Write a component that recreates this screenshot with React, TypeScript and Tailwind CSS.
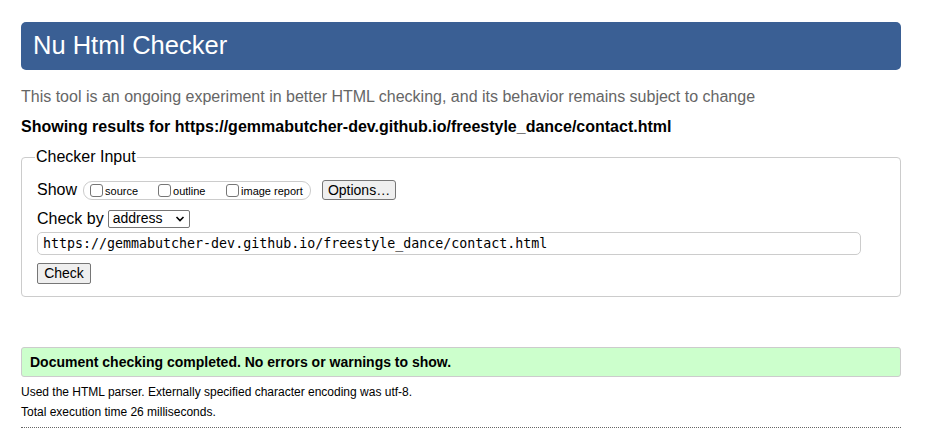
import React from "react";

const Box = ({ label }: { label: string }) => (
  <span className="flex items-center">
    <span className="inline-block w-[13px] h-[13px] border border-[#767676] rounded-[3px] bg-white" />
    <span className="ml-[2px] mt-[2px] text-[11px] leading-none text-black">{label}</span>
  </span>
);

export default function App() {
  return (
    <div
      className="w-[930px] h-[428px] bg-white overflow-hidden pl-[21px] pr-[29px] pt-[22px] text-black"
      style={{ fontFamily: '"Liberation Sans", Arial, sans-serif' }}
    >
      <div className="h-[48px] bg-[#3a5f94] rounded-[5px] flex items-center pl-[12px]">
        <h1 className="text-white text-[25.5px] leading-none">Nu Html Checker</h1>
      </div>
      <p className="mt-[18px] text-[16px] leading-[18px] text-[#666666]">
        This tool is an ongoing experiment in better HTML checking, and its behavior remains subject to change
      </p>
      <p className="mt-[12px] text-[16px] leading-[18px] font-bold">
        Showing results for https://gemmabutcher-dev.github.io/freestyle_dance/contact.html
      </p>
      <fieldset className="mt-[12px] border border-[#cccccc] rounded-[4px] pl-[15px] pr-[39px] pb-[12px]">
        <legend className="ml-[-2px] px-[1px] text-[16px] leading-[18px]">Checker Input</legend>
        <div className="flex items-center mt-[14px] h-[20px]">
          <span className="text-[16px] leading-none">Show</span>
          <span className="ml-[6px] h-[19px] w-[228px] border border-[#cccccc] rounded-[9px] flex items-center pl-[6px]">
            <span className="w-[68px]"><Box label="source" /></span>
            <span className="w-[68px]"><Box label="outline" /></span>
            <Box label="image report" />
          </span>
          <span className="ml-[11px] h-[20px] w-[74px] border border-[#767676] bg-[#efefef] rounded-[3px] text-[14px] flex items-center justify-center">
            Options…
          </span>
        </div>
        <div className="flex items-center mt-[9px] h-[19px]">
          <span className="text-[16px] leading-none">Check by</span>
          <span className="ml-[4px] h-[18px] w-[82px] border border-[#767676] rounded-[2px] bg-white flex items-center justify-between pl-[4px] pr-[4px] text-[14px]">
            address
            <svg width="10" height="8" viewBox="0 0 10 8">
              <path d="M1.5 2 L5 5.5 L8.5 2" fill="none" stroke="#000" strokeWidth="1.6" />
            </svg>
          </span>
        </div>
        <div
          className="mt-[4px] h-[23px] border border-[#cccccc] rounded-[5px] flex items-center pl-[5px] text-[13.3px]"
          style={{ fontFamily: '"DejaVu Sans Mono", monospace' }}
        >
          https://gemmabutcher-dev.github.io/freestyle_dance/contact.html
        </div>
        <div className="mt-[8px] h-[21px] w-[54px] border border-[#767676] bg-[#efefef] rounded-[2px] text-[14px] flex items-center justify-center">
          Check
        </div>
      </fieldset>
      <div className="mt-[50px] h-[30px] bg-[#ccffcc] border border-[#cccccc] rounded-[3px] flex items-center pl-[8px] text-[14px] font-bold">
        Document checking completed. No errors or warnings to show.
      </div>
      <p className="mt-[8px] text-[12px] leading-[14px]">
        Used the HTML parser. Externally specified character encoding was utf-8.
      </p>
      <p className="mt-[6px] text-[12px] leading-[14px]">Total execution time 26 milliseconds.</p>
      <div className="mt-[8px] border-t border-dotted border-[#666666]" />
    </div>
  );
}
